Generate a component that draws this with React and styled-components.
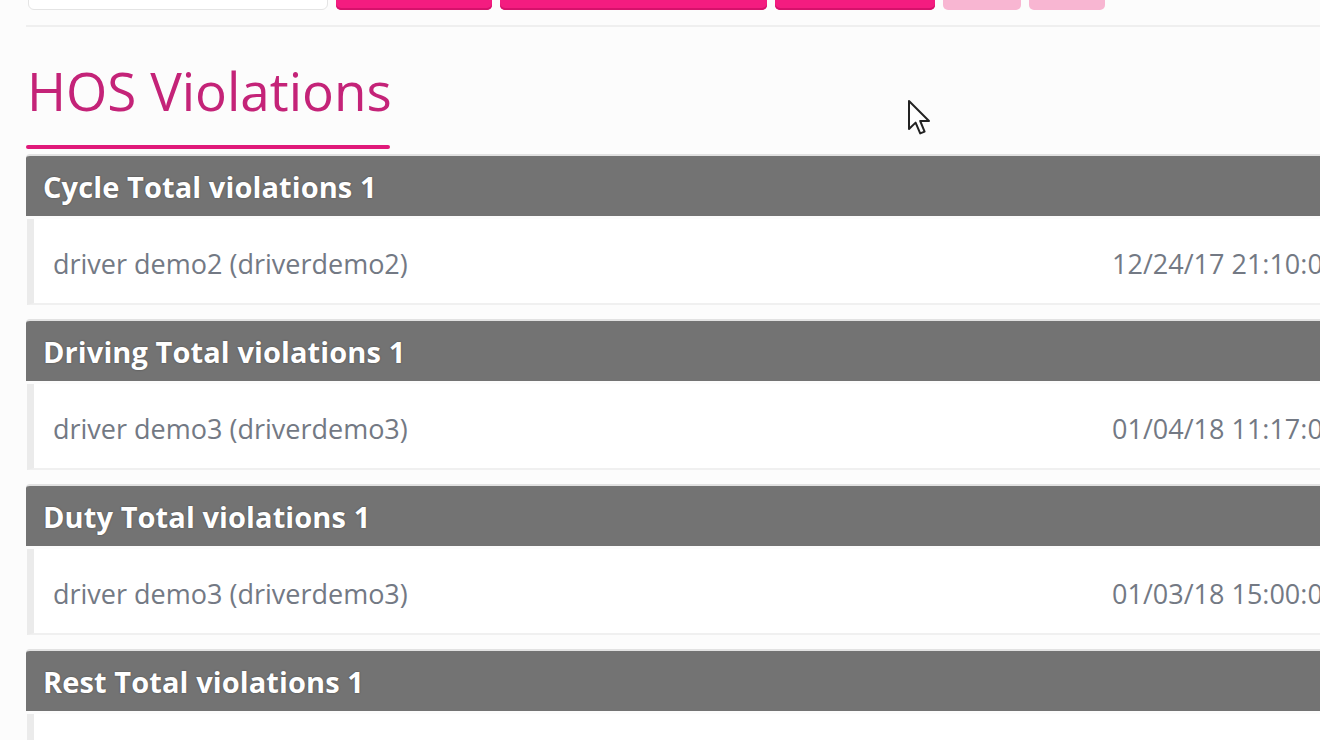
import React from 'react';
import styled, { createGlobalStyle } from 'styled-components';

const GlobalStyle = createGlobalStyle`
  html, body {
    margin: 0;
    padding: 0;
    background: #fcfcfc;
    overflow: hidden;
  }
  body {
    font-family: "Open Sans", "Noto Sans", sans-serif;
  }
`;

const violations = [
  { type: 'Cycle', total: 1, driver: 'driver demo2 (driverdemo2)', time: '12/24/17 21:10:00' },
  { type: 'Driving', total: 1, driver: 'driver demo3 (driverdemo3)', time: '01/04/18 11:17:00' },
  { type: 'Duty', total: 1, driver: 'driver demo3 (driverdemo3)', time: '01/03/18 15:00:00' },
  { type: 'Rest', total: 1, driver: '', time: '' },
];

const App = () => {
  return (
    <>
      <GlobalStyle />
      <Page>
        <Toolbar>
          <SearchInput />
          <Button $w={156} />
          <Button $w={267} />
          <Button $w={160} />
          <Button $w={78} $disabled />
          <Button $w={76} $disabled />
        </Toolbar>
        <Divider />
        <Title>HOS Violations</Title>
        <Underline />
        <List>
          {violations.map((v) => (
            <Group key={v.type}>
              <GroupHeader>{v.type} Total violations {v.total}</GroupHeader>
              <Row>
                <Driver>{v.driver}</Driver>
                <Time>{v.time}</Time>
              </Row>
            </Group>
          ))}
        </List>
        <Cursor width="26" height="38" viewBox="0 0 13 19">
          <path
            d="M1 1 L1 15 L4.3 11.8 L6.6 17.2 L8.8 16.3 L6.6 11 L11 11 Z"
            fill="#fff"
            stroke="#222"
            strokeWidth="1"
            strokeLinejoin="round"
          />
        </Cursor>
      </Page>
    </>
  );
};

// Styled components
const Page = styled.div`
  position: relative;
  width: 1380px;
  padding-left: 26px;
  height: 740px;
  overflow: hidden;
`;

const Toolbar = styled.div`
  display: flex;
  gap: 8px;
  margin-top: -30px;
  padding-left: 2px;
  height: 40px;
`;

const SearchInput = styled.div`
  width: 298px;
  height: 38px;
  border: 1px solid #e4e4e4;
  border-radius: 6px;
  background: #fff;
`;

const Button = styled.div`
  width: ${(p) => p.$w}px;
  height: 40px;
  border-radius: 5px;
  background: ${(p) => (p.$disabled ? '#f8b6d2' : '#f41c80')};
  box-shadow: ${(p) => (p.$disabled ? 'none' : 'inset 0 -2px 0 #d6126c')};
`;

const Divider = styled.div`
  margin-top: 15px;
  height: 2px;
  background: #efefef;
`;

const Title = styled.h1`
  margin: 34px 0 0 1px;
  font-size: 53px;
  font-weight: 400;
  line-height: 60px;
  color: #c42378;
`;

const Underline = styled.div`
  width: 364px;
  height: 4px;
  margin-top: 24px;
  background: #e0197a;
  border-radius: 2px;
`;

const List = styled.div`
  margin-top: 5px;
  display: flex;
  flex-direction: column;
  gap: 14px;
`;

const Group = styled.div`
  display: flex;
  flex-direction: column;
  gap: 3px;
`;

const GroupHeader = styled.div`
  height: 62px;
  display: flex;
  align-items: center;
  padding-left: 17px;
  background: #737373;
  border-top: 2px solid #e2e2e2;
  border-radius: 4px 4px 0 0;
  color: #fff;
  font-size: 29px;
  font-weight: 700;
  letter-spacing: 0.1px;
  text-shadow: 0 0 2px rgba(0, 0, 0, 0.4);
  box-sizing: border-box;
`;

const Row = styled.div`
  height: 86px;
  display: flex;
  align-items: center;
  background: #fff;
  border-left: 7px solid #ebebeb;
  border-bottom: 2px solid #f0f0f0;
  margin-left: 1px;
  padding: 4px 14px 0 19px;
  box-sizing: border-box;
`;

const Driver = styled.div`
  flex: 1;
  font-size: 27px;
  color: #737984;
`;

const Time = styled.div`
  width: 280px;
  font-size: 27px;
  color: #737984;
`;

const Cursor = styled.svg`
  position: absolute;
  left: 907px;
  top: 99px;
`;

export default App;
